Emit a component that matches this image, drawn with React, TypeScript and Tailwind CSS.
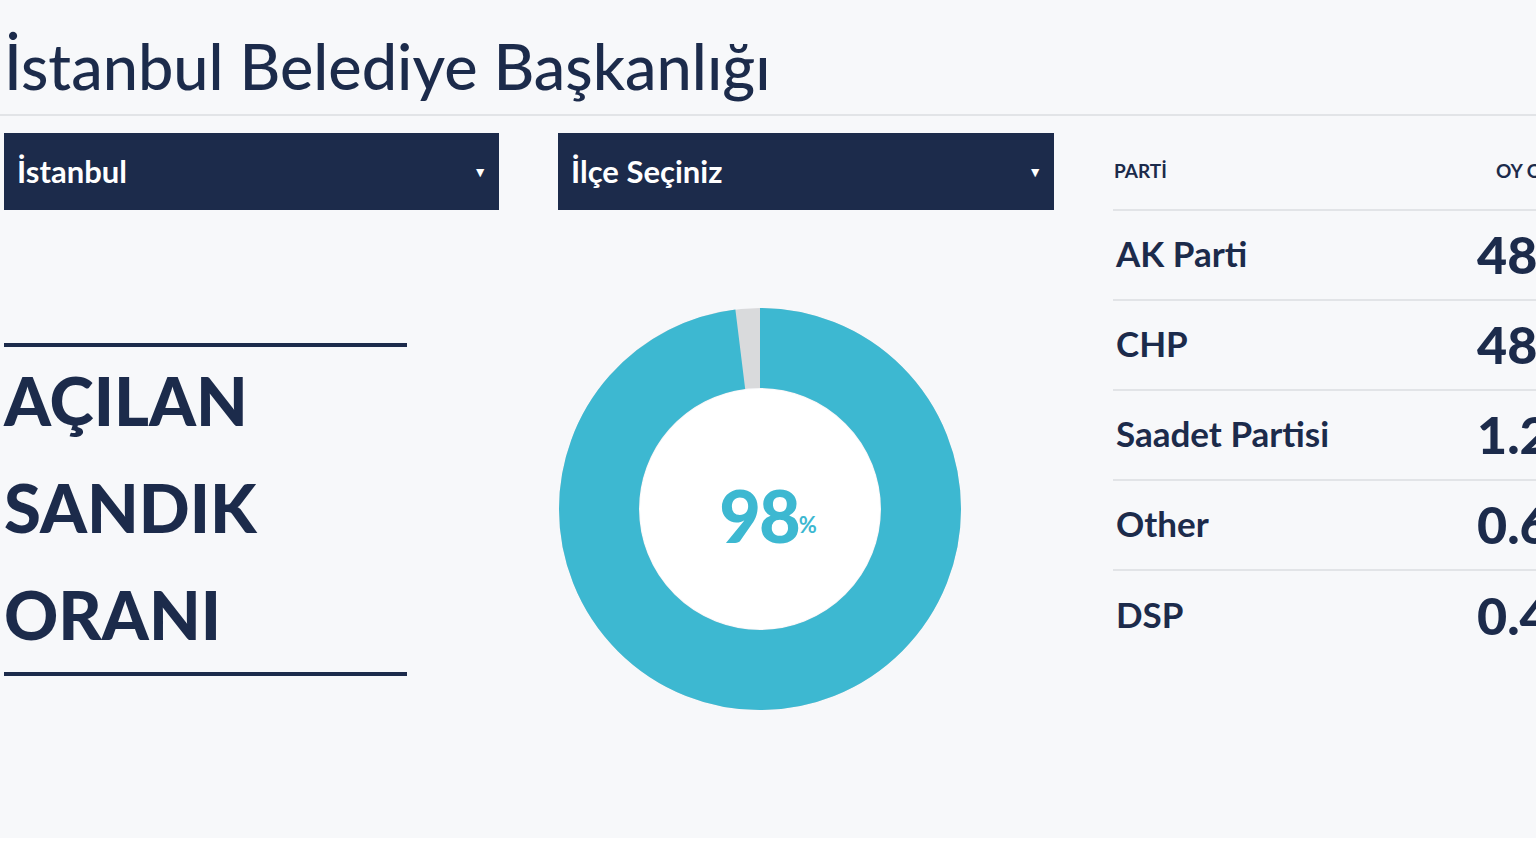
import React from 'react'

const navy = '#1c2b4b'

const parties = [
  { name: 'AK Parti', value: '48.70' },
  { name: 'CHP', value: '48.77' },
  { name: 'Saadet Partisi', value: '1.20' },
  { name: 'Other', value: '0.62' },
  { name: 'DSP', value: '0.45' },
]

const Donut = ({ percent }: { percent: number }) => {
  const r = 161
  const c = 2 * Math.PI * r
  const filled = (percent / 100) * c
  return (
    <div className="relative w-[404px] h-[404px]">
      <svg width="404" height="404" viewBox="0 0 404 404">
        <circle cx="202" cy="202" r={r} fill="none" stroke="#d9dadc" strokeWidth="80" />
        <circle
          cx="202"
          cy="202"
          r={r}
          fill="none"
          stroke="#3db8d1"
          strokeWidth="80"
          strokeDasharray={`${filled} ${c}`}
          transform="rotate(-90 202 202)"
        />
        <circle cx="202" cy="202" r="120" fill="#ffffff" />
      </svg>
      <div className="absolute inset-0 flex items-center justify-center pl-[16px] pt-[12px]">
        <span className="text-[72px] font-black leading-none text-[#3db8d1] tracking-[-2px]">{percent}</span>
        <span className="text-[22px] font-bold text-[#3db8d1] mt-[18px]">%</span>
      </div>
    </div>
  )
}

const Select = ({ label }: { label: string }) => (
  <div className="h-[77px] bg-[#1c2b4b] flex items-center justify-between pl-[13px] pr-[12px]">
    <span className="text-white text-[31px] font-bold">{label}</span>
    <span className="text-white text-[14px]">▼</span>
  </div>
)

const App = () => {
  return (
    <div
      className="w-[1536px] h-[864px] overflow-hidden bg-white"
      style={{ fontFamily: 'Lato, "Open Sans", sans-serif' }}
    >
      <div className="h-[838px] bg-[#f7f8fa] overflow-hidden">
        <div className="h-[116px] border-b-2 border-[#e2e4e7] pl-[4px] pt-[34px]">
          <h1 className="text-[63px] leading-none text-[#1c2b4b] font-medium">İstanbul Belediye Başkanlığı</h1>
        </div>
        <div className="flex pl-[4px] pt-[17px] gap-[59px] w-[1700px]" style={{ color: navy }}>
          <div className="w-[495px] shrink-0">
            <Select label="İstanbul" />
            <div className="mt-[133px] w-[403px] border-t-4 border-b-4 border-[#1c2b4b] pt-0 pb-[4px]">
              {['AÇILAN', 'SANDIK', 'ORANI'].map((w) => (
                <div key={w} className="text-[67px] font-black leading-[107px]">
                  {w}
                </div>
              ))}
            </div>
          </div>
          <div className="w-[496px] shrink-0">
            <Select label="İlçe Seçiniz" />
            <div className="mt-[97px] flex justify-start">
              <Donut percent={98} />
            </div>
          </div>
          <div className="w-[500px] shrink-0">
            <div className="h-[78px] flex items-center justify-between border-b-2 border-[#e2e4e7] text-[19px] font-bold">
              <span className="pl-[1px]">PARTİ</span>
              <span className="w-[117px]">OY ORANI</span>
            </div>
            {parties.map((p, i) => (
              <div
                key={p.name}
                className={`h-[90px] flex items-center justify-between pb-[3px] ${i < parties.length - 1 ? 'border-b-2 border-[#e2e4e7]' : ''}`}
              >
                <span className="pl-[3px] text-[35px] font-bold">{p.name}</span>
                <span className="w-[136px] text-[52px] font-black">{p.value}</span>
              </div>
            ))}
          </div>
        </div>
      </div>
    </div>
  )
}

export default App
